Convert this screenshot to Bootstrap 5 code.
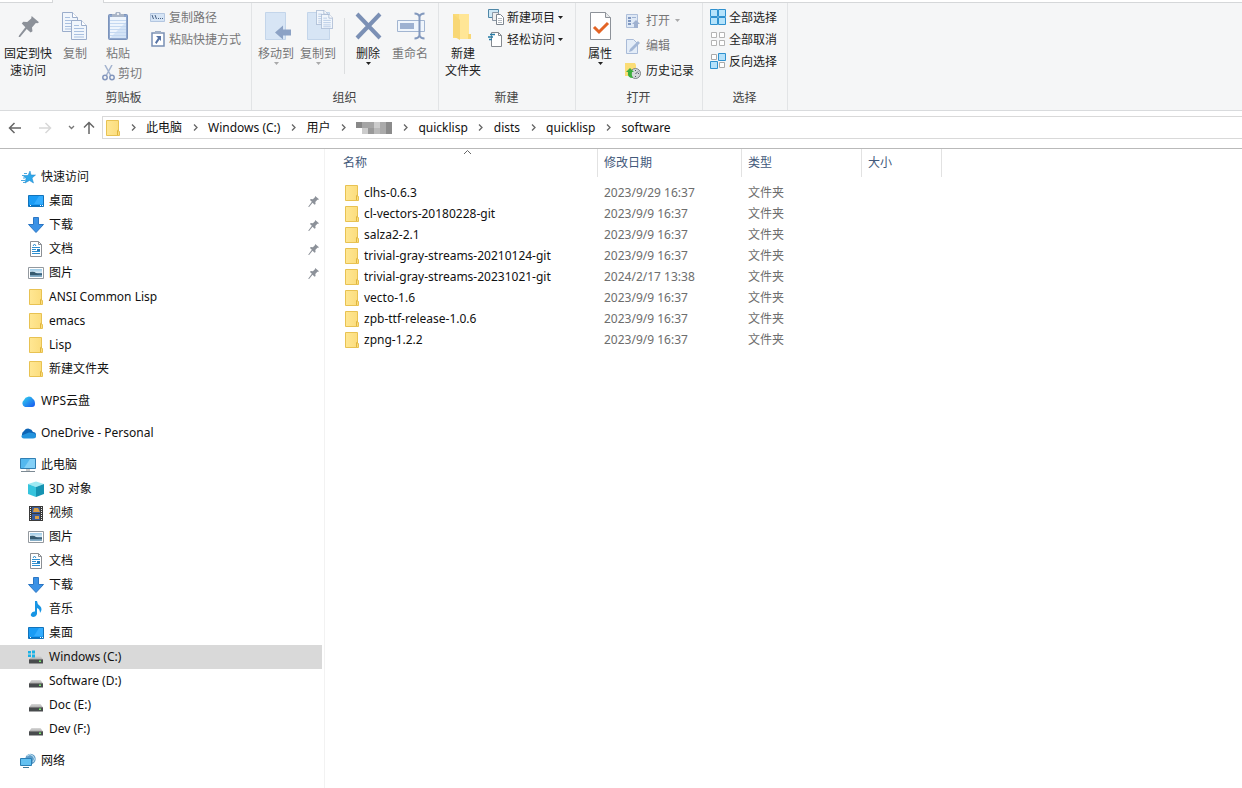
<!DOCTYPE html>
<html lang="zh-CN">
<head>
<meta charset="utf-8">
<meta name="viewport" content="width=device-width, initial-scale=1">
<title>software</title>
<link href="https://cdn.jsdelivr.net/npm/bootstrap@5.3.0/dist/css/bootstrap.min.css" rel="stylesheet">
<style>
body{font-family:"Noto Sans","Noto Sans CJK SC",sans-serif;font-size:12px;line-height:17px;color:#111;background:#fff}
svg{display:block;flex:none}
button{font:inherit;color:inherit;background:none;border:0;padding:0}
a{color:inherit;text-decoration:none}
.tab-strip{height:3px;background:#f5f6f7}
.tab-side{background:#fff;border-bottom:1px solid #d5d7d9}
.tab-first{width:53px;border-right:1px solid #d5d7d9}
.tab-open{width:50px}
.tab-rest{border-left:1px solid #d5d7d9}
.ribbon{background:#f5f6f7;height:108px;border-bottom:1px solid #d9dbdd;color:#222}
.rgroup{border-right:1px solid #e2e4e6;padding-top:3px}
.rgroup-name{height:22px;line-height:20px;text-align:center;color:#444;padding-right:4px}
.g-clip{width:252px}.g-org{width:187px;padding-left:3px}.g-new{width:137px;padding-left:3px}
.g-open{width:127px;padding-left:3px}.g-sel{width:85px;padding-left:7px}
.g-sel .rgroup-name{padding-right:8px}
.big{width:42px;display:flex;flex-direction:column;align-items:center;align-self:flex-start;padding-top:4px;white-space:nowrap}
.big svg.pic{margin-bottom:3px}
.big-pin{width:56px}.big-copy{width:38px}
.paste-col{width:56px;padding-left:3px}
.paste-col .small-row{margin-left:5px}
.off{color:#777}
.small-row{display:flex;align-items:center;height:22px;gap:3px;white-space:nowrap}
.tall .small-row{height:25px;gap:1px}
.tall{padding-top:2px}
.rule{width:1px;height:56px;background:#dcdee0;margin:12px 2px 0 5px}
.address{height:38px;border-bottom:1px solid #b9b9b9;padding:5px 0 9px 8px}
.nav-btns{width:94px}
.crumbs{border:1px solid #d9d9d9;border-right:0;padding-left:3px}
.crumbs ol{list-style:none}
.chev{width:26px;display:flex;justify-content:center}
.mosaic{width:36px;height:12px}
.side{width:325px;border-right:1px solid #f2f2f2;padding:16px 2px 15px 0}
.side a{display:flex;align-items:center;height:24px;line-height:16px;gap:5px;padding-left:28px;padding-right:3px}
.side a.root{padding-left:20px}
.side a.root.later{margin-top:8px}
.side a.active{background:#d9d9d9}
.files{width:617px;table-layout:fixed;border-collapse:collapse}
.files th{height:33px;padding:0;font-weight:400;color:#42587a;vertical-align:top}
.head-cell{height:28px;line-height:27px;padding-left:6px;border-right:1px solid #e2e2e2}
.head-name{padding-left:18px;position:relative}
.sort-mark{position:absolute;left:138px;top:0}
.files td{height:21px;padding:0 0 0 6px;color:#6d6d6d;white-space:nowrap}
.files td.fname{padding-left:20px;color:#111}
.files td.fname a{gap:5px}
.c1{width:273px}.c2{width:144px}.c3{width:120px}.c4{width:80px}
</style>
<script src="https://cdn.jsdelivr.net/npm/bootstrap@5.3.0/dist/js/bootstrap.bundle.min.js"></script>
</head>
<body>
<svg width="0" height="0" class="position-absolute" aria-hidden="true">
<defs>
<linearGradient id="gy" x1="0" x2="1"><stop offset="0" stop-color="#ffe793"/><stop offset="1" stop-color="#fbdc7c"/></linearGradient>
<linearGradient id="gb" x1="0" x2="1" y2="1"><stop offset="0" stop-color="#35d6ee"/><stop offset="1" stop-color="#1554f0"/></linearGradient>
<linearGradient id="gp" x1="0" x2="0" y2="1"><stop offset="0" stop-color="#9ccbe8"/><stop offset=".5" stop-color="#dcebf3"/><stop offset=".55" stop-color="#4f7897"/><stop offset="1" stop-color="#8fb7cf"/></linearGradient>
<linearGradient id="gd" x1="0" x2="0" y2="1"><stop offset="0" stop-color="#d9d9d9"/><stop offset="1" stop-color="#aaa"/></linearGradient>
</defs>
<symbol id="folder" viewBox="0 0 14 16"><path d="M.5.5h12v11h1v4H.5z" fill="url(#gy)" stroke="#e8c252"/><path d="M11.500 15v-4q0-1 1-1" fill="none" stroke="#e0b63e"/></symbol>
<symbol id="pin" viewBox="0 0 20 20"><path d="M13 0l7 6-1.500 1-1.500-.3-3.700 4.300.5 3.500-1.800 1.300-3.700-3.500L2 20l-1.500.3.5-1.700 6-8L3.600 7.200 5 5.500l3.800.3 3.800-3.500z" fill="#8c9199"/></symbol>
<symbol id="desk" viewBox="0 0 16 16"><path d="M.5 2.500h15v11H.5z" fill="#1a9cf5" stroke="#1273ba"/><path d="M1 12h14v1H1z" fill="#0873c4"/><path d="M11 3h4v8H6z" fill="#34adff"/><path d="M2 12h1v1H2zM12 12h1v1h-1zM14 12h1v1h-1z" fill="#fff"/></symbol>
<symbol id="down" viewBox="0 0 16 16"><path d="M5.500.5h5v7h5L8 15.500.5 7.500h5z" fill="#3b92e6" stroke="#2b76c4"/></symbol>
<symbol id="doc" viewBox="0 0 16 16"><path d="M2.500.5h8l3 3v12h-11z" fill="#fff" stroke="#8b8f94"/><path d="M10.500.5v3h3" fill="none" stroke="#8b8f94"/><path d="M5 5l1.500-2L8 5M4 6.500h8M4 8.500h4M4 10.500h8M4 12.500h8" stroke="#2e8fd0" fill="none"/><path d="M9 8h3v2H9z" fill="#267dbb"/></symbol>
<symbol id="photo" viewBox="0 0 16 16"><path d="M.5 2.500h15v11H.5z" fill="#fff" stroke="#93999f"/><path d="M2 4h12v8H2z" fill="url(#gp)"/><path d="M2 7q4-1 6 1t6 1v1H2z" fill="#365b70"/></symbol>
<symbol id="drive" viewBox="0 0 16 16"><path d="M3.500 6h9l2.500 3.500H1z" fill="url(#gd)"/><path d="M1 9h14v4.500H1z" fill="#484b4d"/><path d="M1 9h14v1H1z" fill="#777"/><path d="M11 10.500h2v1.500h-2z" fill="#75e66b"/></symbol>
<symbol id="chevr" viewBox="0 0 5 7"><path d="M1 .5l3 3-3 3" fill="none" stroke="#666" stroke-width="1.300"/></symbol>
<symbol id="caret" viewBox="0 0 5 3"><path d="M0 0h5L2.500 3z" fill="currentColor"/></symbol>
<symbol id="page" viewBox="0 0 16 20"><path d="M.5.5h10l5 5v14H.5z" fill="#f1f6fc" stroke="#9badcb"/><path d="M10.500.5v5h5" fill="#fff" stroke="#9badcb"/><path d="M3 5.500h5M3 8.500h10M3 11.500h10M3 14.500h10M3 17h10" stroke="#a9c0e0"/></symbol>
</svg>

<div class="tab-strip d-flex"><div class="tab-side tab-first"></div><div class="tab-open"></div><div class="tab-side tab-rest flex-grow-1"></div></div>

<div class="ribbon d-flex">
  <section class="rgroup g-clip d-flex flex-column">
    <div class="d-flex flex-grow-1">
      <button class="big big-pin"><svg class="pic" width="32" height="32" viewBox="0 0 32 32"><use href="#pin" x="6" y="6" width="21" height="21"/></svg>固定到快<br>速访问</button>
      <button class="big big-copy off"><svg class="pic" width="32" height="32"><use href="#page" x="3" y="2" width="16" height="20"/><use href="#page" x="12" y="10" width="16" height="20"/></svg>复制</button>
      <div class="paste-col">
        <button class="big off"><svg class="pic" width="32" height="32"><rect x="6.500" y="4.500" width="19" height="25" rx="1" fill="#8ea6cd" stroke="#7b93bb"/><path d="M8 7h16v21H8z" fill="#eef5fd"/><path d="M8 28l16-16v16z" fill="#d3e3f6"/><path d="M8 10.500h16M8 13.500h16M8 16.500h16M8 19.500h16M8 22.500h16M8 25.500h16" stroke="#c4d8f1"/><path d="M10 7V4h3l1-2h4l1 2h3v3z" fill="#a9b5c7"/><circle cx="16" cy="4" r="1" fill="#fff"/></svg>粘贴</button>
        <button class="small-row off"><svg width="13" height="16" viewBox="0 0 13 16"><path d="M3 0l6 11M10 0L4 11" stroke="#a3b3cf" stroke-width="1.500"/><circle cx="3" cy="12.500" r="2.200" fill="none" stroke="#8396bd" stroke-width="1.500"/><circle cx="10" cy="12.500" r="2.200" fill="none" stroke="#8396bd" stroke-width="1.500"/></svg>剪切</button>
      </div>
      <div>
        <button class="small-row off"><svg width="16" height="16"><path d="M.5 4.500h14v8H.5z" fill="#d5e4f5" stroke="#b3c6e0"/><path d="M2 6l1.500 4M5 6l1.500 4M8 9.500h1M10 9.500h1M12 9.500h1" stroke="#476084"/></svg>复制路径</button>
        <button class="small-row off"><svg width="16" height="16"><rect x="2" y="2" width="12" height="13" fill="#fff" stroke="#7990b5" stroke-width="1.500"/><path d="M5 0h6v3H5z" fill="#a0afc6"/><path d="M6 5h5v5L9.500 8.500 6.500 13 5 11.500 8 7z" fill="#5673a5"/></svg>粘贴快捷方式</button>
      </div>
    </div>
    <div class="rgroup-name">剪贴板</div>
  </section>

  <section class="rgroup g-org d-flex flex-column">
    <div class="d-flex flex-grow-1">
      <button class="big off"><svg class="pic" width="32" height="32"><path d="M5.500 2.500h20v27h-20z" fill="#d7e5f5" stroke="#c3d5ea"/><path d="M15 22.500l8-7v4h8v6h-8v4z" fill="#8ca2c5"/></svg>移动到<svg width="5" height="3" opacity=".6"><use href="#caret"/></svg></button>
      <button class="big off"><svg class="pic" width="32" height="32"><path d="M5.500 2.500h22v27h-22z" fill="#d7e5f5" stroke="#c3d5ea"/><use href="#page" x="14" y="0" width="12" height="15"/><use href="#page" x="19" y="4" width="12" height="15"/></svg>复制到<svg width="5" height="3" opacity=".6"><use href="#caret"/></svg></button>
      <div class="rule"></div>
      <button class="big"><svg class="pic" width="32" height="32"><path d="M5 4l23 24M28 4L5 28" stroke="#7b90b5" stroke-width="4"/></svg>删除<svg width="5" height="3"><use href="#caret"/></svg></button>
      <button class="big off"><svg class="pic" width="32" height="32"><path d="M3.500 10.500h27v11h-27z" fill="#eff5fc" stroke="#a2b5d1"/><path d="M6 13h14v6H6z" fill="#9db1d1"/><path d="M20.500 3.500q4 0 5 3 1-3 5-3M20.500 28.500q4 0 5-3 1 3 5 3M25.500 6v20" stroke="#8298bd" stroke-width="2" fill="none"/></svg>重命名</button>
    </div>
    <div class="rgroup-name">组织</div>
  </section>

  <section class="rgroup g-new d-flex flex-column">
    <div class="d-flex flex-grow-1">
      <button class="big"><svg class="pic" width="32" height="32"><path d="M6 4h11v24H6z" fill="#fbdc7a"/><path d="M12 4h10v20l2 2v3H12z" fill="#ffe696"/><path d="M6 4l7 6v20l-7-4z" fill="#f8d775"/><path d="M21 24h3v5h-3z" fill="#f8d775"/></svg>新建<br>文件夹</button>
      <div class="ms-1">
        <button class="small-row"><svg width="16" height="16"><path d="M.5.5h10v8H.5z" fill="#cfe8f5" stroke="#4f87a7"/><path d="M4.500 3.500h6v8h-6z" fill="#eee" stroke="#8b98a6"/><path d="M8.500 5.500h4l3 3v7h-7z" fill="#fff" stroke="#7d858e"/><path d="M10 9.500h4M10 11.500h4M10 13.500h4" stroke="#b1b8bf"/></svg>新建项目<svg width="5" height="3"><use href="#caret"/></svg></button>
        <button class="small-row"><svg width="16" height="16"><path d="M3.500 1.500h7l3 3v11h-10z" fill="#fff" stroke="#858a90"/><path d="M10.500 1.500v3h3" fill="none" stroke="#858a90"/><path d="M2 3.500h5M0 6h5M1 8.500h3" stroke="#267ca7" stroke-width="1.500"/></svg>轻松访问<svg width="5" height="3"><use href="#caret"/></svg></button>
      </div>
    </div>
    <div class="rgroup-name">新建</div>
  </section>

  <section class="rgroup g-open d-flex flex-column">
    <div class="d-flex flex-grow-1">
      <button class="big"><svg class="pic" width="32" height="32"><path d="M6.500 2.500h15l5 5v22h-20z" fill="#fff" stroke="#8d9299"/><path d="M21.500 2.500v5h5" fill="#e7e9eb" stroke="#8d9299"/><path d="M10 17l5 5 9-9" fill="none" stroke="#e36425" stroke-width="3"/></svg>属性<svg width="5" height="3"><use href="#caret"/></svg></button>
      <div class="tall ms-1">
        <button class="small-row off"><svg width="16" height="16"><path d="M1.500 1.500h11v13h-11z" fill="#dfe9f6" stroke="#aebfda"/><path d="M3 4h3v2H3zM3 7h3v2H3zM3 10h3v2H3z" fill="#7f97c0"/><path d="M7 4.500h4" stroke="#9fb3d3"/><path d="M11 7l4 4h-2v4H9v-4H7z" fill="#9fb1d0"/></svg><span class="ms-1">打开</span><svg class="ms-1" width="5" height="3" opacity=".6"><use href="#caret"/></svg></button>
        <button class="small-row off"><svg width="16" height="16"><path d="M1.500 1.500h7l4 4v10h-11z" fill="#e4edf8" stroke="#a8bad7"/><path d="M4 14l1-3 8-8 2 2-8 8z" fill="#a3b7d6"/></svg><span class="ms-1">编辑</span></button>
        <button class="small-row"><svg width="16" height="16"><path d="M0 0h10l1 2v11H0z" fill="#fbdd76"/><circle cx="10.500" cy="10.500" r="5" fill="#d4d8da" stroke="#7c8387"/><path d="M10.500 11l2.500-2.500M10.500 7v1M14 10.500h-1M10.500 14v-1" fill="none" stroke="#4e5b65"/><path d="M1 9l4-4 4 4H7q-1 3 1 6-6 0-5-6z" fill="#3dae3e"/></svg><span class="ms-1">历史记录</span></button>
      </div>
    </div>
    <div class="rgroup-name">打开</div>
  </section>

  <section class="rgroup g-sel d-flex flex-column">
    <div class="flex-grow-1">
      <button class="small-row"><svg width="16" height="16"><path d="M.5.500h7v7h-7zM8.500.5h7v7h-7zM.5 8.500h7v7h-7zM8.500 8.500h7v7h-7z" fill="#b5e3fb" stroke="#2f91cf"/></svg>全部选择</button>
      <button class="small-row"><svg width="16" height="16"><path d="M1.500 1.500h5v5h-5zM9.500 1.500h5v5h-5zM1.500 9.500h5v5h-5zM9.500 9.500h5v5h-5z" fill="#fff" stroke="#b4b4b4"/></svg>全部取消</button>
      <button class="small-row"><svg width="16" height="16"><path d="M1.500 1.500h5v5h-5zM9.500 9.500h5v5h-5z" fill="#fff" stroke="#aaa"/><path d="M8.500.5h7v7h-7zM.5 8.500h7v7h-7z" fill="#b5e1fa" stroke="#2f91cf"/></svg>反向选择</button>
    </div>
    <div class="rgroup-name">选择</div>
  </section>
</div>

<div class="address d-flex">
  <div class="nav-btns d-flex align-items-center">
    <button aria-label="后退"><svg width="14" height="12"><path d="M6.500 1L1.500 6l5 5M1.500 6H13" fill="none" stroke="#666" stroke-width="1.500"/></svg></button>
    <button class="ms-3" aria-label="前进"><svg width="14" height="12"><path d="M7.500 1l5 5-5 5M12.500 6H1" fill="none" stroke="#d8d8d8" stroke-width="1.500"/></svg></button>
    <button class="ms-3" aria-label="最近"><svg width="7" height="5"><path d="M1 1l2.500 2.500L6 1" fill="none" stroke="#777" stroke-width="1.300"/></svg></button>
    <button class="ms-2" aria-label="上移"><svg width="12" height="13"><path d="M1 6.500l5-5 5 5M6 1.500V13" fill="none" stroke="#666" stroke-width="1.500"/></svg></button>
  </div>
  <nav class="crumbs flex-grow-1 d-flex align-items-center" aria-label="路径">
    <svg width="14" height="16"><use href="#folder"/></svg>
    <ol class="d-flex align-items-center m-0 p-0">
      <li class="chev"><svg width="5" height="7"><use href="#chevr"/></svg></li><li><a href="#">此电脑</a></li>
      <li class="chev"><svg width="5" height="7"><use href="#chevr"/></svg></li><li><a href="#">Windows (C:)</a></li>
      <li class="chev"><svg width="5" height="7"><use href="#chevr"/></svg></li><li><a href="#">用户</a></li>
      <li class="chev"><svg width="5" height="7"><use href="#chevr"/></svg></li><li><svg class="mosaic" viewBox="0 0 36 12" shape-rendering="crispEdges"><path d="M0 0h6v6H0z" fill="#888"/><path d="M6 0h6v6H6zM12 0h6v6h-6z" fill="#a5a5a5"/><path d="M6 6h6v6H6z" fill="#ccc"/><path d="M12 6h6v6h-6z" fill="#999"/><path d="M18 0h6v6h-6z" fill="#ccc"/><path d="M18 6h6v6h-6z" fill="#b9b9b9"/><path d="M24 0h6v12h-6z" fill="#aaa"/><path d="M30 0h6v12h-6z" fill="#8b8b8b"/></svg></li>
      <li class="chev"><svg width="5" height="7"><use href="#chevr"/></svg></li><li><a href="#">quicklisp</a></li>
      <li class="chev"><svg width="5" height="7"><use href="#chevr"/></svg></li><li><a href="#">dists</a></li>
      <li class="chev"><svg width="5" height="7"><use href="#chevr"/></svg></li><li><a href="#">quicklisp</a></li>
      <li class="chev"><svg width="5" height="7"><use href="#chevr"/></svg></li><li><a href="#">software</a></li>
    </ol>
  </nav>
</div>

<div class="d-flex">
  <nav class="side flex-shrink-0" aria-label="导航窗格">
    <a href="#" class="root"><svg width="16" height="16"><path d="M10 2l1 4h4.500L12 9l1.500 5L9.500 11.500 5 14l1-4.500L3 6.500h5z" fill="#2fa8ea" stroke="#1e84c9" stroke-width=".5"/><path d="M4 4.500h3M2 6.500h3M3 9h2M1 11.500h4M3 13.500h2" stroke="#4ba9e0"/></svg>快速访问</a>
    <a href="#"><svg width="16" height="16"><use href="#desk"/></svg>桌面<svg class="ms-auto" width="11" height="11"><use href="#pin"/></svg></a>
    <a href="#"><svg width="16" height="16"><use href="#down"/></svg>下载<svg class="ms-auto" width="11" height="11"><use href="#pin"/></svg></a>
    <a href="#"><svg width="16" height="16"><use href="#doc"/></svg>文档<svg class="ms-auto" width="11" height="11"><use href="#pin"/></svg></a>
    <a href="#"><svg width="16" height="16"><use href="#photo"/></svg>图片<svg class="ms-auto" width="11" height="11"><use href="#pin"/></svg></a>
    <a href="#"><svg width="16" height="16"><use href="#folder"/></svg>ANSI Common Lisp</a>
    <a href="#"><svg width="16" height="16"><use href="#folder"/></svg>emacs</a>
    <a href="#"><svg width="16" height="16"><use href="#folder"/></svg>Lisp</a>
    <a href="#"><svg width="16" height="16"><use href="#folder"/></svg>新建文件夹</a>
    <a href="#" class="root later"><svg width="16" height="16"><path d="M5 14a4 4 0 0 1-1-7 5 5 0 0 1 9-1q2 1 2 5 0 3-3 3z" fill="url(#gb)"/></svg>WPS云盘</a>
    <a href="#" class="root later"><svg width="16" height="16"><path d="M4 13a4 4 0 0 1 0-7 5 5 0 0 1 9 1 3 3 0 0 1 0 6z" fill="#0d64b5"/><path d="M4 13.500q-3-.5-2.500-3L9 7.500l4 .5q3 .5 3 3t-3 2.500z" fill="#2393dd"/></svg>OneDrive - Personal</a>
    <a href="#" class="root later"><svg width="16" height="16"><path d="M.5 1.500h15v10H.5z" fill="#54b8ef" stroke="#317fb3"/><path d="M10 2h5v9H4z" fill="#83d0f7"/><path d="M6 12h4v2H6z" fill="#ccc"/><path d="M1 14h14v1H1z" fill="#7b8993"/></svg>此电脑</a>
    <a href="#"><svg width="16" height="16"><path d="M0 3l8-2.500L16 3l-8 3z" fill="#9ee9f2"/><path d="M0 3l8 3v10l-8-3z" fill="#35c4dd"/><path d="M16 3L8 6v10l8-3z" fill="#1593b2"/></svg>3D 对象</a>
    <a href="#"><svg width="16" height="16"><path d="M1 1h14v15H1z" fill="#3a3a3a"/><path d="M4 2h8v6H4zM4 9h8v6H4z" fill="#395c9c"/><path d="M6 3h4l2 4H5zM7 11h4v3H7z" fill="#d99f47"/><path d="M2.500 2v13M13.500 2v13" stroke="#eee" stroke-dasharray="1 1"/></svg>视频</a>
    <a href="#"><svg width="16" height="16"><use href="#photo"/></svg>图片</a>
    <a href="#"><svg width="16" height="16"><use href="#doc"/></svg>文档</a>
    <a href="#"><svg width="16" height="16"><use href="#down"/></svg>下载</a>
    <a href="#"><svg width="16" height="16"><path d="M7 0h2q0 3 3 5 3 3 0 7 0-4-3-5v6q-1 3-4 3-3-1-2-3 1-3 4-2.500z" fill="#1795e4"/></svg>音乐</a>
    <a href="#"><svg width="16" height="16"><use href="#desk"/></svg>桌面</a>
    <a href="#" class="active"><svg width="16" height="16"><use href="#drive" y="1"/><path d="M0 2h6v6H0z" fill="#d9d9d9"/><path d="M0 2h3v2.500H0zM4 1.500h3v3H4zM0 5.500h3V8H0zM4 5.500h3v3H4z" fill="#19b1e5"/></svg>Windows (C:)</a>
    <a href="#"><svg width="16" height="16"><use href="#drive" y="1"/></svg>Software (D:)</a>
    <a href="#"><svg width="16" height="16"><use href="#drive" y="1"/></svg>Doc (E:)</a>
    <a href="#"><svg width="16" height="16"><use href="#drive" y="1"/></svg>Dev (F:)</a>
    <a href="#" class="root later"><svg width="16" height="16"><circle cx="10.500" cy="6" r="5.200" fill="#5f9dc9"/><path d="M7 3q3-3 6 0t0 6" fill="none" stroke="#c4e3f2"/><path d="M.5 5.500h11v7H.5z" fill="#62c0f1" stroke="#2a7eb4"/><path d="M3 14.500h6" stroke="#447898"/></svg>网络</a>
  </nav>
  <main class="flex-grow-1">
    <table class="files">
      <thead><tr>
        <th class="c1"><div class="head-cell head-name">名称<svg class="sort-mark" width="9" height="6"><path d="M1 5l3.500-3.500L8 5" fill="none" stroke="#666"/></svg></div></th>
        <th class="c2"><div class="head-cell">修改日期</div></th>
        <th class="c3"><div class="head-cell">类型</div></th>
        <th class="c4"><div class="head-cell">大小</div></th>
      </tr></thead>
      <tbody id="rows"></tbody>
    </table>
  </main>
</div>
<script>
const files = [
  ["clhs-0.6.3", "2023/9/29 16:37"],
  ["cl-vectors-20180228-git", "2023/9/9 16:37"],
  ["salza2-2.1", "2023/9/9 16:37"],
  ["trivial-gray-streams-20210124-git", "2023/9/9 16:37"],
  ["trivial-gray-streams-20231021-git", "2024/2/17 13:38"],
  ["vecto-1.6", "2023/9/9 16:37"],
  ["zpb-ttf-release-1.0.6", "2023/9/9 16:37"],
  ["zpng-1.2.2", "2023/9/9 16:37"]
];
document.getElementById("rows").innerHTML = files.map(([name, date]) =>
  `<tr><td class="fname"><a href="#" class="d-flex align-items-center"><svg width="14" height="16"><use href="#folder"/></svg>${name}</a></td><td>${date}</td><td>文件夹</td><td></td></tr>`).join("");
</script>
</body>
</html>
